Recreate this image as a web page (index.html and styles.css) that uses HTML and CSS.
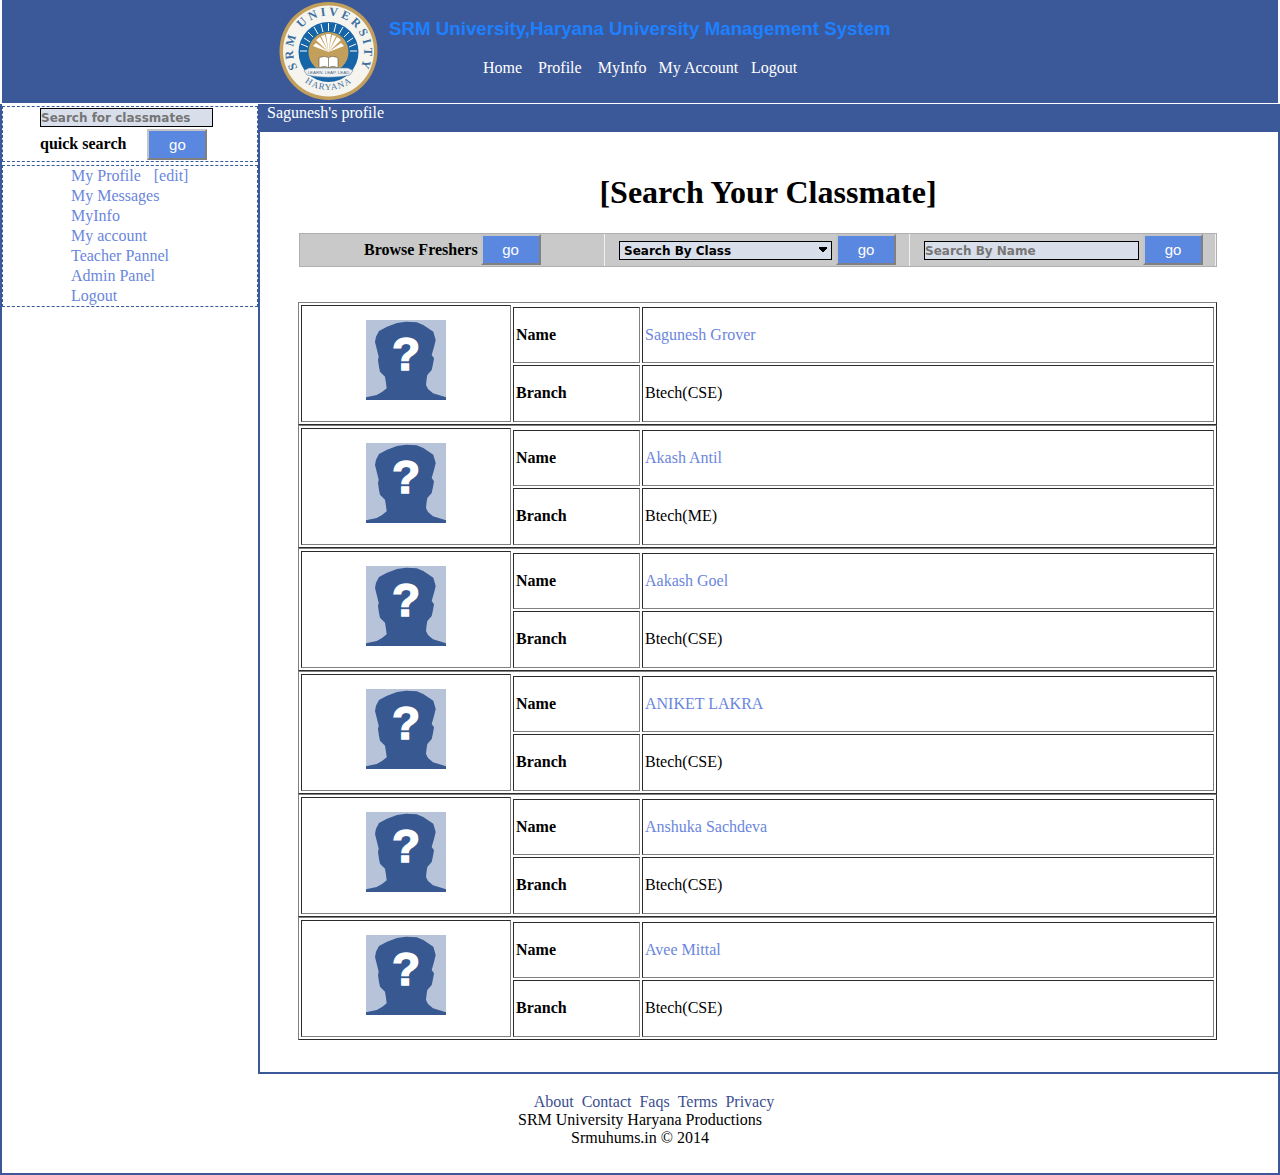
FILE: index.html
```html
<!DOCTYPE html>
<html lang="en">
<head>
  <meta charset="UTF-8" />
  <title>SRM University,Haryana University Management System</title>
  <link rel="stylesheet" href="styles.css">
</head>
<body>

<!-- shared avatar picture -->
<svg class="defs" width="0" height="0" aria-hidden="true">
  <symbol id="avatar" viewBox="0 0 80 80">
    <rect width="80" height="80" fill="#b7c3d9"/>
    <path fill="#375890" d="M40 1.7 L31 3 L21 6.7 L13 11 L10 16.7 L9 22 L11 30 L12.7 36.7 L12 40 L13 47 L14 51.7 L19 56.7 L20 63 L20.7 68.3 L16 72 L10.7 75 L0 77.3 L0 80 L80 80 L80 77.3 L67 73.3 L62 69 L60 65 L60.5 60 L61.3 55 L65.7 50 L67 44 L68 38.3 L65.7 35 L68 27 L69.7 20 L67.3 11.7 L57.3 5 L50.7 2.3 Z"/>
  </symbol>
</svg>

<div class="header">
  <svg class="logo" viewBox="0 0 99 98" width="99" height="98" role="img" aria-label="SRM University Haryana">
    <defs>
      <path id="arcTop" d="M18.5 66 A35.5 35.5 0 1 1 81.5 65"/>
      <path id="arcBottom" d="M24 78.5 A39 39 0 0 0 75 78.5"/>
    </defs>
    <circle cx="49.5" cy="49" r="49" fill="#c39f5c"/>
    <circle cx="49.5" cy="49" r="45.5" fill="#f6f4ee"/>
    <circle cx="49.5" cy="50" r="30" fill="#1565a8"/>
    <g stroke="#fff" stroke-width="1">
      <path d="M49.5 21 V29 M42 22 L44 30 M35 25 L39 32 M29 30 L34 35 M25 36 L31 40 M22 42 L29 45 M21 49 H28"/>
      <path d="M57 22 L55 30 M64 25 L60 32 M70 30 L65 35 M74 36 L68 40 M77 42 L70 45 M78 49 H71"/>
    </g>
    <circle cx="49.5" cy="50" r="20" fill="#c39f5c"/>
    <path fill="#fff" d="M49.5 50 L34 44 L37 41 Z M49.5 50 L37 38 L41 35 Z M49.5 50 L42 34 L46 33 Z M49.5 50 L47 32 L52 32 Z M49.5 50 L53 33 L57 34 Z M49.5 50 L58 35 L62 38 Z M49.5 50 L62 41 L65 44 Z"/>
    <path fill="#fff" stroke="#6b6250" stroke-width=".7" d="M40 56 C44 54 47 54 49.5 56 C52 54 55 54 59 56 V66 C55 64 52 64 49.5 66 C47 64 44 64 40 66 Z M49.5 56 V66"/>
    <path fill="#eef2f5" stroke="#5d7f9c" stroke-width=".6" d="M25 68.5 L30 66 H69 L74 68.5 L71 73 C58 76 41 76 28 73 Z"/>
    <text class="logo-motto" x="49.5" y="72" text-anchor="middle">LEARN. LEAP. LEAD</text>
    <text class="logo-ring"><textPath href="#arcTop" textLength="145">SRM UNIVERSITY</textPath></text>
    <text class="logo-ring logo-ring-small"><textPath href="#arcBottom" startOffset="50%" text-anchor="middle">HARYANA</textPath></text>
  </svg>
  <div class="header-text">
    <div class="site-title">SRM University,Haryana University Management System</div>
    <div class="top-nav">
      <a href="#" class="wide">Home</a>
      <a href="#" class="wide">Profile</a>
      <a href="#">MyInfo</a>
      <a href="#">My Account</a>
      <a href="#">Logout</a>
    </div>
  </div>
</div>

<div class="page">
  <div class="content">
    <div class="sidebar">
      <div class="side-box quick">
        <input class="field quick-field" type="text" placeholder="Search for classmates">
        <div class="quick-row">
          <b>quick search</b>
          <button class="go">go</button>
        </div>
      </div>
      <div class="side-box side-links">
        <div><a href="#">My Profile</a><a href="#" class="edit">[edit]</a></div>
        <div><a href="#">My Messages</a></div>
        <div><a href="#">MyInfo</a></div>
        <div><a href="#">My account</a></div>
        <div><a href="#">Teacher Pannel</a></div>
        <div><a href="#">Admin Panel</a></div>
        <div><a href="#">Logout</a></div>
      </div>
    </div>

    <div class="main">
      <div class="title-bar">Sagunesh's profile</div>
      <h1>[Search Your Classmate]</h1>

      <div class="search-bar">
        <div class="search-cell browse">
          <b>Browse Freshers</b>
          <button class="go">go</button>
        </div>
        <div class="search-cell by-class">
          <select class="field class-select">
            <option>Search By Class</option>
          </select>
          <button class="go">go</button>
        </div>
        <div class="search-cell by-name">
          <input class="field name-field" type="text" placeholder="Search By Name">
          <button class="go">go</button>
        </div>
      </div>

      <div class="mates">
        <table class="mate">
          <colgroup><col class="col-photo"><col class="col-label"><col></colgroup>
          <tr><td class="photo" rowspan="3"><svg class="avatar" viewBox="0 0 80 80"><use href="#avatar"/><text class="avatar-mark" x="40" y="49.5" text-anchor="middle">?</text></svg></td></tr>
          <tr class="row-name"><th>Name</th><td><a href="#">Sagunesh Grover</a></td></tr>
          <tr class="row-branch"><th>Branch</th><td>Btech(CSE)</td></tr>
        </table>
        <table class="mate">
          <colgroup><col class="col-photo"><col class="col-label"><col></colgroup>
          <tr><td class="photo" rowspan="3"><svg class="avatar" viewBox="0 0 80 80"><use href="#avatar"/><text class="avatar-mark" x="40" y="49.5" text-anchor="middle">?</text></svg></td></tr>
          <tr class="row-name"><th>Name</th><td><a href="#">Akash Antil</a></td></tr>
          <tr class="row-branch"><th>Branch</th><td>Btech(ME)</td></tr>
        </table>
        <table class="mate">
          <colgroup><col class="col-photo"><col class="col-label"><col></colgroup>
          <tr><td class="photo" rowspan="3"><svg class="avatar" viewBox="0 0 80 80"><use href="#avatar"/><text class="avatar-mark" x="40" y="49.5" text-anchor="middle">?</text></svg></td></tr>
          <tr class="row-name"><th>Name</th><td><a href="#">Aakash Goel</a></td></tr>
          <tr class="row-branch"><th>Branch</th><td>Btech(CSE)</td></tr>
        </table>
        <table class="mate">
          <colgroup><col class="col-photo"><col class="col-label"><col></colgroup>
          <tr><td class="photo" rowspan="3"><svg class="avatar" viewBox="0 0 80 80"><use href="#avatar"/><text class="avatar-mark" x="40" y="49.5" text-anchor="middle">?</text></svg></td></tr>
          <tr class="row-name"><th>Name</th><td><a href="#">ANIKET LAKRA</a></td></tr>
          <tr class="row-branch"><th>Branch</th><td>Btech(CSE)</td></tr>
        </table>
        <table class="mate">
          <colgroup><col class="col-photo"><col class="col-label"><col></colgroup>
          <tr><td class="photo" rowspan="3"><svg class="avatar" viewBox="0 0 80 80"><use href="#avatar"/><text class="avatar-mark" x="40" y="49.5" text-anchor="middle">?</text></svg></td></tr>
          <tr class="row-name"><th>Name</th><td><a href="#">Anshuka Sachdeva</a></td></tr>
          <tr class="row-branch"><th>Branch</th><td>Btech(CSE)</td></tr>
        </table>
        <table class="mate">
          <colgroup><col class="col-photo"><col class="col-label"><col></colgroup>
          <tr><td class="photo" rowspan="3"><svg class="avatar" viewBox="0 0 80 80"><use href="#avatar"/><text class="avatar-mark" x="40" y="49.5" text-anchor="middle">?</text></svg></td></tr>
          <tr class="row-name"><th>Name</th><td><a href="#">Avee Mittal</a></td></tr>
          <tr class="row-branch"><th>Branch</th><td>Btech(CSE)</td></tr>
        </table>
      </div>
    </div>
  </div>

  <div class="footer">
    <div class="footer-links">
      <a href="#">About</a>
      <a href="#">Contact</a>
      <a href="#">Faqs</a>
      <a href="#">Terms</a>
      <a href="#">Privacy</a>
    </div>
    <div>SRM University Haryana Productions</div>
    <div>Srmuhums.in © 2014</div>
  </div>
</div>

</body>
</html>
```

FILE: styles.css
```css
html, body {
  margin: 0;
  padding: 0;
  background: #fff;
  color: #000;
  font-family: "Liberation Serif", "Times New Roman", serif;
  font-size: 16px;
}

a {
  text-decoration: none;
  color: #6a86dc;
}

.defs {
  position: absolute;
}

/* Header */
.header {
  display: flex;
  height: 103px;
  margin: 0 2px 1px;
  padding: 2px 0 0 277px;
  box-sizing: border-box;
  background: #3b5998;
}

.logo {
  flex: none;
}

.logo-ring {
  font-family: "Liberation Serif", serif;
  font-size: 12px;
  font-weight: bold;
  fill: #3b6f9f;
}

.logo-ring-small {
  font-size: 9px;
  font-weight: normal;
  letter-spacing: 1px;
}

.logo-motto {
  font-family: "Liberation Sans", sans-serif;
  font-size: 4.4px;
  fill: #55677a;
}

.header-text {
  margin-left: 11px;
}

.site-title {
  margin-top: 15px;
  font-family: "Liberation Sans", Arial, sans-serif;
  font-size: 18.72px;
  font-weight: bold;
  line-height: 24px;
  color: #1e80ff;
}

.top-nav {
  display: flex;
  gap: 12px;
  margin: 17px 0 0 94px;
  line-height: 20px;
}

.top-nav a {
  color: #fff;
}

.top-nav a.wide {
  margin-right: 4px;
}

.top-nav a:last-child {
  margin-left: 1px;
}

/* Page frame */
.page {
  border: 2px solid #3b5998;
  border-top: none;
}

.content {
  display: flex;
}

/* Left column */
.sidebar {
  flex: none;
  width: 256px;
  padding-top: 2px;
  box-sizing: border-box;
}

.side-box {
  border: 1px dashed #3b5998;
}

.quick {
  height: 56px;
  margin-bottom: 3px;
  padding: 1px 0 0 37px;
  box-sizing: border-box;
}

.field {
  display: block;
  height: 19px;
  padding: 0;
  box-sizing: border-box;
  border: 1px solid #000;
  border-radius: 0;
  outline: none;
  background-color: #d9dfea;
  font-family: "DejaVu Sans", Verdana, sans-serif;
  font-size: 12px;
  font-weight: bold;
}

.quick-field {
  width: 173px;
}

.quick-row {
  display: flex;
  align-items: center;
  gap: 21px;
  margin-top: 2px;
}

.quick-row b {
  padding-bottom: 2px;
}

.go {
  flex: none;
  width: 60px;
  height: 31px;
  padding: 0;
  box-sizing: border-box;
  border: 2px solid;
  border-color: #c4c4c4 #808080 #808080 #c4c4c4;
  background: #5a87e0;
  color: #fff;
  font-family: "Liberation Sans", Arial, sans-serif;
  font-size: 15px;
}

.side-links {
  padding-left: 68px;
  line-height: 20px;
}

.edit {
  margin-left: 13px;
}

/* Main column */
.main {
  flex: 1;
  min-width: 0;
  padding-bottom: 32px;
  border-left: 2px solid #3b5998;
  border-bottom: 2px solid #3b5998;
}

.title-bar {
  height: 28px;
  padding-left: 7px;
  background: #3b5998;
  color: #fff;
  line-height: 18px;
}

h1 {
  margin: 42px 0 22px;
  padding-right: 2px;
  font-size: 32px;
  line-height: 37px;
  text-align: center;
}

.search-bar {
  display: flex;
  width: 918px;
  height: 34px;
  margin-left: 39px;
  box-sizing: border-box;
  border: 1px solid #b0b0b0;
  background: #c9c9c9;
}

.search-cell {
  display: flex;
  align-items: center;
  box-sizing: border-box;
  border-right: 1px solid #f0f0f0;
}

.search-cell .go {
  margin-bottom: 1px;
}

.search-cell .field {
  margin-top: 1px;
}

.browse {
  width: 305px;
  padding-left: 64px;
  gap: 3px;
}

.by-class {
  width: 305px;
  padding-left: 14px;
  gap: 4px;
}

.by-name {
  flex: 1;
  padding-left: 14px;
  gap: 4px;
}

.class-select {
  width: 213px;
  padding-left: 4px;
  appearance: none;
  background-image:
    linear-gradient(45deg, transparent 50%, #000 50%),
    linear-gradient(-45deg, transparent 50%, #000 50%);
  background-size: 4px 7px;
  background-position: 199px 5px, 203px 5px;
  background-repeat: no-repeat;
  color: #000;
}

.name-field {
  width: 215px;
}

.mates {
  margin: 35px 0 0 38px;
}

.mate {
  width: 919px;
  table-layout: fixed;
  border-collapse: separate;
  border-spacing: 2px;
  border: 1px solid;
  border-color: #808080 #2b2b2b #2b2b2b #808080;
}

.col-photo {
  width: 210px;
}

.col-label {
  width: 127px;
}

.mate td, .mate th {
  padding: 2px;
  box-sizing: border-box;
  border: 1px solid;
  border-color: #2b2b2b #808080 #808080 #2b2b2b;
  text-align: left;
  vertical-align: middle;
}

.mate .photo {
  padding-bottom: 6px;
  text-align: center;
}

.row-name th, .row-name td {
  height: 56px;
}

.row-branch th, .row-branch td {
  height: 57px;
  padding-bottom: 3px;
}

.avatar {
  width: 80px;
  height: 80px;
}

.avatar-mark {
  font-family: "Liberation Sans", Arial, sans-serif;
  font-size: 46px;
  font-weight: bold;
  fill: #fff;
  stroke: #fff;
  stroke-width: 1.5;
}

/* Footer */
.footer {
  padding: 19px 0 26px;
  line-height: 18px;
  text-align: center;
}

.footer-links {
  padding-left: 28px;
}

.footer-links a {
  margin: 0 2px;
  color: #3b4f8f;
}
```
